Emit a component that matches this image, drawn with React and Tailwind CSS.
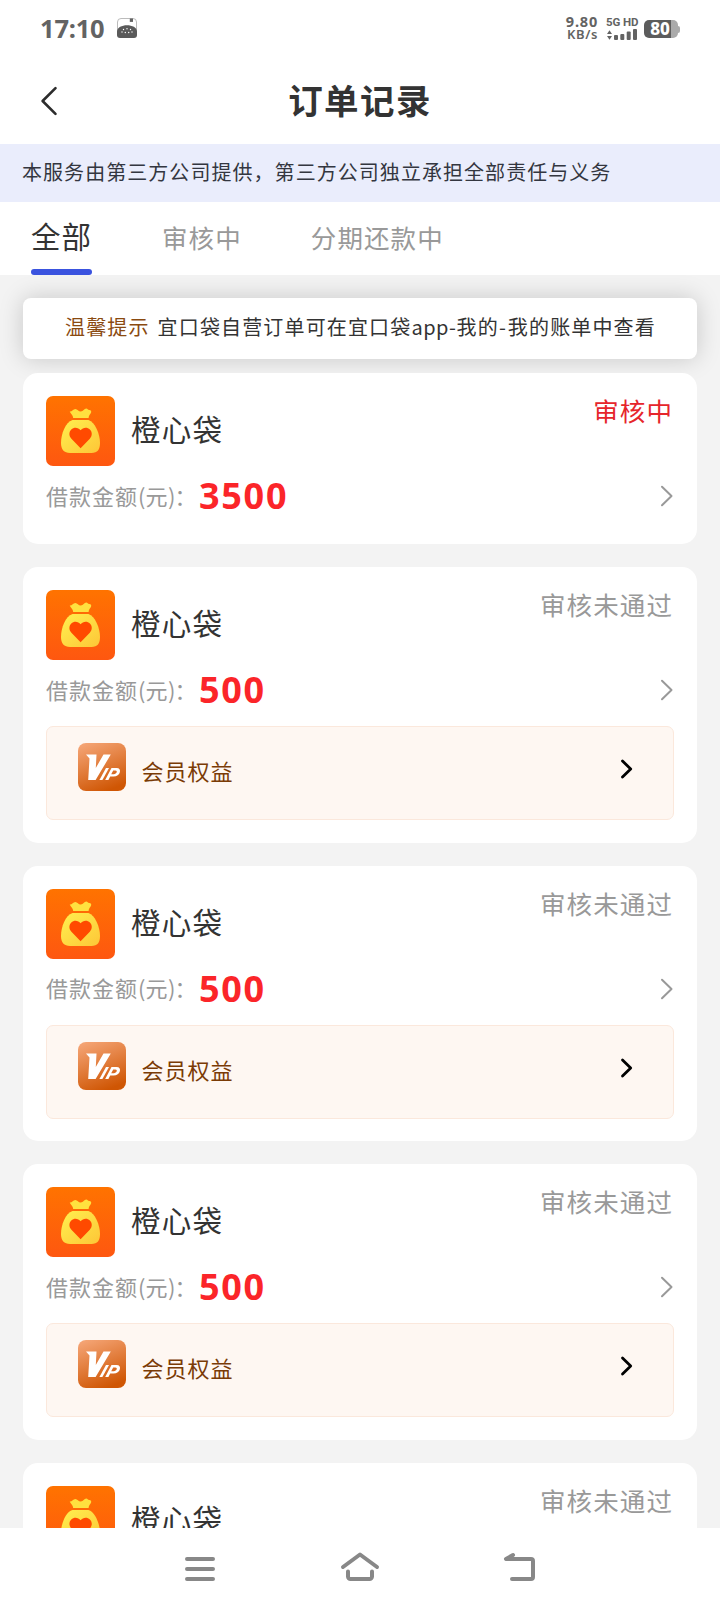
import React from 'react';

const orders = [
  { id: 1, name: '橙心袋', amount: '3500', status: '审核中', active: true },
  { id: 2, name: '橙心袋', amount: '500', status: '审核未通过', vip: true },
  { id: 3, name: '橙心袋', amount: '500', status: '审核未通过', vip: true },
  { id: 4, name: '橙心袋', amount: '500', status: '审核未通过', vip: true },
  { id: 5, name: '橙心袋', amount: '500', status: '审核未通过', vip: true },
];

function StatusBar() {
  return (
    <div className="flex h-14 items-center justify-between pl-10 pr-10 text-[#636363]">
      <div className="flex items-center gap-[12px] pb-px">
        <span className="font-['Noto_Sans','Noto_Sans_CJK_SC',sans-serif] text-[25.5px] font-bold leading-9 tracking-[-0.2px]">17:10</span>
        <svg width="20" height="20" viewBox="0 0 20 20">
          <rect x="0.500" y="0.500" width="19" height="18" rx="3.500" fill="none" stroke="#aaa" strokeWidth="0.8" />
          <path d="M0 13.500C0 5 20 5 20 13.500V17a3 3 0 0 1-3 3H3a3 3 0 0 1-3-3Z" fill="#5a5a5a" />
          <rect x="12.800" y="0.500" width="3.200" height="3.400" fill="#636363" />
          <g fill="#fff">
            <circle cx="6.500" cy="11.500" r="0.700" /><circle cx="10" cy="10.800" r="0.700" /><circle cx="13.500" cy="11.500" r="0.700" />
            <circle cx="5" cy="14" r="0.700" /><circle cx="8.300" cy="14.500" r="0.700" /><circle cx="11.700" cy="14.500" r="0.700" /><circle cx="15" cy="14" r="0.700" />
          </g>
        </svg>
      </div>
      <div className="flex items-center">
        <div className="flex flex-col items-end font-['Noto_Sans',sans-serif] leading-[13px]">
          <span className="whitespace-nowrap text-[14.5px] font-bold tracking-[0.8px]">9.80</span>
          <span className="whitespace-nowrap text-[13px] font-semibold tracking-[0.6px]">KB/s</span>
        </div>
        <div className="ml-[8px] flex w-8 flex-col">
          <span className="whitespace-nowrap font-['Roboto',sans-serif] text-[11.5px] font-bold leading-[13px] tracking-[-0.1px]">5G HD</span>
          <svg width="32" height="12" viewBox="0 0 32 12" fill="#636363">
            <path d="M1 5 3.500 1.300 6 5ZM1 7h5l-2.500 3.700Z" />
            <rect x="8" y="6" width="4" height="5" rx="1" />
            <rect x="14.300" y="5" width="4" height="6" rx="1" />
            <rect x="20.700" y="2.500" width="4" height="8.500" rx="1" />
            <rect x="27" y="0" width="4" height="11" rx="1" />
          </svg>
        </div>
        <div className="mb-px ml-[6px] mt-[3px] flex items-center">
          <div className="flex h-[18px] w-[34px] items-center justify-center rounded-[5px] bg-linear-to-r from-[#5c5c5c] from-80% to-[#aaa] to-80% pr-[2px] font-['Noto_Sans',sans-serif] text-[17px] font-extrabold leading-[18px] text-white">
            80
          </div>
          <div className="h-[7px] w-[2px] rounded-r-sm bg-[#aaa]" />
        </div>
      </div>
    </div>
  );
}

function TitleBar() {
  return (
    <div className="grid h-[88px] grid-cols-[120px_1fr_120px] items-center">
      <svg width="18" height="30" viewBox="0 0 18 30" className="ml-10 mt-px" fill="none" stroke="#2c2c2c" strokeWidth="2.600" strokeLinecap="round" strokeLinejoin="round">
        <path d="M15.500 2.200 2.600 15l12.900 12.800" />
      </svg>
      <h1 className="whitespace-nowrap pb-[2px] text-center text-[34.5px] font-bold leading-[50px] tracking-[1.400px] text-[#333]">订单记录</h1>
      <span />
    </div>
  );
}

function Tabs() {
  return (
    <nav className="flex h-[73px] shrink-0 bg-white pl-[31px] text-[25.5px] leading-[26px] text-[#999]">
      <div className="flex w-[61px] flex-col justify-between">
        <span className="mt-[18px] whitespace-nowrap text-[29.5px] leading-[30px] tracking-[0.9px] text-[#333]">全部</span>
        <span className="h-[6px] rounded-full bg-[#3a53df]" />
      </div>
      <span className="ml-[70px] whitespace-nowrap pt-[22px] tracking-[1.1px]">审核中</span>
      <span className="ml-[69px] whitespace-nowrap pt-[22px] tracking-[1.1px]">分期还款中</span>
    </nav>
  );
}

function BrandIcon() {
  return (
    <svg width="69" height="70" viewBox="0 0 69 70" className="shrink-0">
      <defs>
        <linearGradient id="brandBg" x1="0" y1="0" x2="0" y2="1">
          <stop offset="0" stopColor="#ff7300" />
          <stop offset="1" stopColor="#fe5710" />
        </linearGradient>
        <linearGradient id="brandBag" x1="0" y1="0" x2="1" y2="1">
          <stop offset="0" stopColor="#fff04f" />
          <stop offset="1" stopColor="#fdc637" />
        </linearGradient>
      </defs>
      <rect width="69" height="70" rx="7" fill="url(#brandBg)" />
      <path d="M23.700 15.500c2.400.3 3.400-2.500 5.600-2.500 2.200 0 3 2.600 5.500 2.600s3.300-3 5.500-3c1.400 0 1.400 1.500 2.700 1.300 1.700-.2 2.700 1.200 2 2.800-.8 1.600-2.400 2.800-2.400 5.300H27.200c-.2-3-2.600-4.300-3.500-6.500Z" fill="#ffe13f" />
      <path d="M26.500 24h16C49 26 54 38 54 47c0 6.500-2.500 10-8.500 10H24c-6 0-9-3.500-9-10C15 38 19.500 26 26.500 24Z" fill="url(#brandBag)" />
      <path d="M34.600 52.300 25.400 42.700C22.800 39.800 22.800 36 25.300 33.500c2.700-2.600 7-2.200 9.300.8 2.300-3 6.600-3.400 9.300-.8 2.500 2.500 2.500 6.300-.1 9.200Z" fill="#ff4a00" />
    </svg>
  );
}

function VipIcon() {
  return (
    <svg width="48" height="48" viewBox="0 0 48 48" className="shrink-0">
      <defs>
        <linearGradient id="vipBg" x1="0.2" y1="0" x2="0.6" y2="1">
          <stop offset="0" stopColor="#f4a373" />
          <stop offset="1" stopColor="#cf5604" />
        </linearGradient>
      </defs>
      <rect width="48" height="48" rx="8" fill="url(#vipBg)" />
      <g fill="#fff">
        <path d="M8 11.500h10.500L17.800 25 25.500 11.500h7.300L17.600 37h-7.400l1.300-21.500Z" />
        <path d="M28 25h3l-6.600 12h-3Z" />
        <path fillRule="evenodd" d="M33.500 25h5c6 0 4 8.600-3 8.600h-3.300L30.400 37h-3.200Zm1.700 2.500-2 3.700h2.600c3 0 4.200-3.700 1.500-3.700Z" />
      </g>
    </svg>
  );
}

function OrderCard({ order }) {
  return (
    <article className={order.vip ? 'h-[275.67px] shrink-0 rounded-[15px] bg-white px-[23px] pt-[23px]' : 'h-[171px] shrink-0 rounded-[15px] bg-white px-[23px] pt-[23px]'}>
      <div className="flex h-[70px] items-start">
        <BrandIcon />
        <span className="ml-4 mt-[15px] grow text-[29.5px] leading-[34px] tracking-[1.2px] text-[#333]">{order.name}</span>
        <span className={order.active ? 'mr-px mt-px text-[25.5px] leading-[26px] tracking-[1.1px] text-[#e6252b]' : 'mr-px mt-px text-[25.5px] leading-[26px] tracking-[1.1px] text-[#999]'}>{order.status}</span>
      </div>
      <div className="flex h-[66px] items-center pb-[6px]">
        <span className="w-[153px] shrink-0 whitespace-nowrap pb-[3px] text-[22px] leading-8 text-[#999]">
          <span className="tracking-[1px]">借款金额</span>(<span className="tracking-[0.5px]">元</span>)<span className="ml-[-1px]">：</span>
        </span>
        <span className="grow font-['Noto_Sans',sans-serif] text-[36px] font-bold leading-[50px] tracking-[1.7px] text-[#fb2529]">{order.amount}</span>
        <svg width="14" height="22" viewBox="0 0 14 22" className="mr-px" fill="none" stroke="#999" strokeWidth="2" strokeLinecap="round" strokeLinejoin="round">
          <path d="M3 1.800 12.500 11 3 20.200" />
        </svg>
      </div>
      {order.vip && (
        <div className="flex h-[94px] items-start rounded-[7px] border border-[#fbe8dc] bg-[#fef7f2] pl-[31px] pr-[40px] pt-4">
          <VipIcon />
          <span className="ml-[15.500px] mt-[13px] grow text-[22px] leading-[28px] tracking-[1px] text-[#7a3b06]">会员权益</span>
          <svg width="13" height="22" viewBox="0 0 13 22" className="mt-[15px]" fill="none" stroke="#000" strokeWidth="2.800" strokeLinecap="round" strokeLinejoin="round">
            <path d="M2.500 3l8.200 8-8.200 8" />
          </svg>
        </div>
      )}
    </article>
  );
}

function NavBar() {
  return (
    <footer className="flex h-[84px] shrink-0 items-center justify-center gap-[114px] bg-white pb-[2px]">
      <svg width="46" height="40" viewBox="0 0 46 40" stroke="#888" strokeWidth="4" strokeLinecap="round">
        <path d="M10 10h26M10 20h26M10 30h26" />
      </svg>
      <svg width="46" height="40" viewBox="0 0 46 40" fill="none" stroke="#888" strokeWidth="4" strokeLinecap="round" strokeLinejoin="round">
        <path d="M6 18 23 5.500 40 18M11 22.500v5a2.500 2.500 0 0 0 2.500 2.500h19a2.500 2.500 0 0 0 2.500-2.500v-5" />
      </svg>
      <svg width="46" height="40" viewBox="0 0 46 40" fill="none" stroke="#888" strokeWidth="4" strokeLinecap="round" strokeLinejoin="round">
        <path d="M16 6 9 10h25a2 2 0 0 1 2 2v16a2 2 0 0 1-2 2H15" />
      </svg>
    </footer>
  );
}

export default function App() {
  return (
    <div className="flex h-[1612px] w-[720px] flex-col overflow-hidden bg-white font-['Noto_Sans_CJK_SC',sans-serif]">
      <header className="h-36 shrink-0">
        <StatusBar />
        <TitleBar />
      </header>
      <p className="h-[58px] shrink-0 whitespace-nowrap bg-[#eaedfc] pl-[22px] text-[20px] leading-[55px] tracking-[1.05px] text-[#333640]">
        本服务由第三方公司提供，第三方公司独立承担全部责任与义务
      </p>
      <Tabs />
      <main className="flex min-h-0 grow flex-col overflow-hidden bg-[#f3f3f3] px-[23px] pt-[23px]">
        <div className="mb-[14px] flex h-[61px] shrink-0 items-center whitespace-nowrap rounded-lg bg-white pb-[3px] pl-[42px] text-[20px] tracking-[1.15px] text-[#333] shadow-[0_0_24px_rgba(0,0,0,0.18)]">
          <span className="mr-[8px] text-[#8a4a10]">温馨提示</span>
          <span>宜口袋自营订单可在宜口袋<span className="tracking-[0.5px]">app-</span>我的<span className="tracking-[2px]">-</span>我的账单中查看</span>
        </div>
        <section className="flex flex-col gap-[23px]">
          {orders.map((order) => (
            <OrderCard key={order.id} order={order} />
          ))}
        </section>
      </main>
      <NavBar />
    </div>
  );
}
